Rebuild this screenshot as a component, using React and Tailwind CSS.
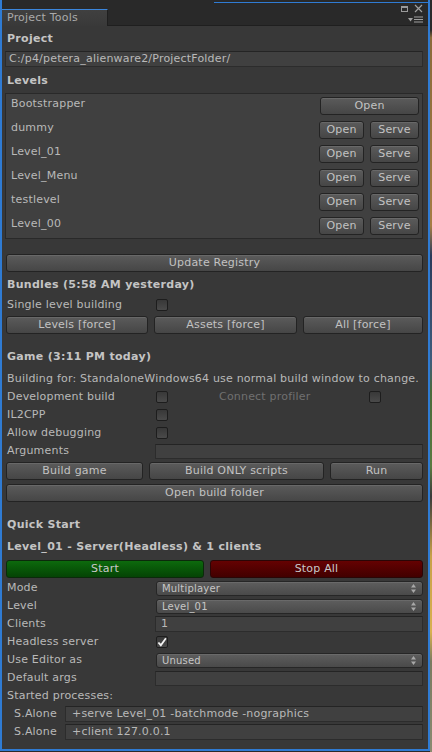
import React from 'react';

const levels = [
  { name: 'Bootstrapper', serve: false },
  { name: 'dummy', serve: true },
  { name: 'Level_01', serve: true },
  { name: 'Level_Menu', serve: true },
  { name: 'testlevel', serve: true },
  { name: 'Level_00', serve: true },
];

function Btn({ children, className = '' }) {
  return (
    <div
      className={`flex h-[18px] shrink-0 items-center justify-center rounded-[3px] border border-[#232323] bg-gradient-to-b from-[#5b5b5b] to-[#464646] text-[#c2c2c2] shadow-[inset_0_1px_0_rgba(255,255,255,0.09)] ${className}`}
    >
      {children}
    </div>
  );
}

function Check({ checked }) {
  return (
    <div className="flex h-[12px] w-[12px] items-center justify-center rounded-[2px] border border-[#1d1d1d] bg-gradient-to-b from-[#383838] to-[#4a4a4a]">
      {checked && (
        <svg width="11" height="11" viewBox="0 0 11 11">
          <polyline points="1.5,5.5 4.2,8.5 9.8,0.8" fill="none" stroke="#f2f2f2" strokeWidth="2" />
        </svg>
      )}
    </div>
  );
}

function Field({ children, className = '' }) {
  return (
    <div
      className={`flex items-center border border-[#2c2c2c] border-t-[#242424] bg-[#404040] text-[#b9b9b9] ${className}`}
    >
      {children}
    </div>
  );
}

function Drop({ value }) {
  return (
    <div className="flex h-[15px] flex-1 items-center rounded-[3px] border border-[#262626] bg-gradient-to-b from-[#5e5e5e] to-[#4a4a4a] pl-[5px] pr-[6px] text-[10px] text-[#c6c6c6] shadow-[inset_0_1px_0_rgba(255,255,255,0.08)]">
      <span className="flex-1">{value}</span>
      <svg width="5" height="9" viewBox="0 0 5 9">
        <polygon points="2.5,0 5,3.4 0,3.4" fill="#a8a8a8" />
        <polygon points="0,5.6 5,5.6 2.5,9" fill="#a8a8a8" />
      </svg>
    </div>
  );
}

function Row({ label, children, labelClass = '' }) {
  return (
    <div className="flex h-[18px] items-center">
      <div className={`w-[151px] shrink-0 whitespace-nowrap pl-[2px] ${labelClass}`}>{label}</div>
      {children}
    </div>
  );
}

function Heading({ children, className = '' }) {
  return (
    <div className={`flex h-[16px] items-center whitespace-nowrap pl-[2px] font-bold tracking-[0.3px] text-[#c4c4c4] ${className}`}>
      {children}
    </div>
  );
}

export default function App() {
  return (
    <div className="flex h-[752px] w-[432px] overflow-hidden bg-[#2a2a2a] font-['DejaVu_Sans',sans-serif] text-[11px] tracking-[0.2px] text-[#b9b9b9]">
      <div className="relative flex h-[751px] w-[430px] shrink-0 flex-col border-b-[2px] border-l-[2px] border-r-[2px] border-[#2f7bd3] bg-[#383838]">
        {/* title bar */}
        <div className="relative flex h-[26px] shrink-0 items-end border-b border-[#1f1f1f] bg-[#292929]">
          <div className="absolute left-[212px] right-0 top-[2px] h-[1px] bg-[#2f7bd3]" />
          <div className="-mb-[1px] flex h-[17px] w-[106px] items-center border-r border-t border-r-[#1f1f1f] border-t-[#3b86dc] bg-gradient-to-b from-[#404040] to-[#393939] pl-[5px] text-[#aaaaaa]">
            Project Tools
          </div>
          <div className="absolute right-[5px] top-[4px] flex flex-col items-end gap-[3px]">
            <div className="flex items-center gap-[6px]">
              <svg width="7" height="6" viewBox="0 0 7 6">
                <rect x="0.5" y="0.5" width="6" height="5" fill="none" stroke="#9a9a9a" />
                <rect x="0" y="0" width="7" height="2" fill="#9a9a9a" />
              </svg>
              <svg width="9" height="9" viewBox="0 0 9 9">
                <path d="M1 1 L8 8 M8 1 L1 8" stroke="#a0a0a0" strokeWidth="1.2" />
              </svg>
            </div>
            <div className="flex items-center gap-[1px]">
              <svg width="5" height="4" viewBox="0 0 5 4">
                <polygon points="0,0 5,0 2.5,3.5" fill="#a0a0a0" />
              </svg>
              <svg width="9" height="7" viewBox="0 0 9 7">
                <path d="M0 1 H9 M0 3.5 H9 M0 6 H9" stroke="#a0a0a0" strokeWidth="1.2" />
              </svg>
            </div>
          </div>
        </div>

        {/* content */}
        <div className="flex flex-col pl-[3px] pr-[5px]">
          <Heading className="mt-[5px]">Project</Heading>
          <Field className="mt-[4px] h-[16px] px-[3px]">C:/p4/petera_alienware2/ProjectFolder/</Field>

          <Heading className="mt-[6px]">Levels</Heading>
          <div className="mt-[4px] flex flex-col border border-[#292929] bg-[#404040]">
            {levels.map((lv) => (
              <div key={lv.name} className="flex h-[24px] items-center pl-[5px] pr-[3px]">
                <span className="mb-[3px] flex-1">{lv.name}</span>
                {lv.serve ? (
                  <div className="flex gap-[6px]">
                    <Btn className="h-[17px] w-[45px]">Open</Btn>
                    <Btn className="h-[17px] w-[49px]">Serve</Btn>
                  </div>
                ) : (
                  <Btn className="h-[17px] w-[99px]">Open</Btn>
                )}
              </div>
            ))}
          </div>

          <div className="mt-[15px] pl-[1px]">
            <Btn>Update Registry</Btn>
          </div>

          <Heading className="mt-[5px]">Bundles (5:58 AM yesterday)</Heading>
          <div className="mt-[3px]">
            <Row label="Single level building">
              <Check />
            </Row>
          </div>
          <div className="mt-[2px] flex gap-[6px] pl-[1px]">
            <Btn className="w-[142px]">Levels [force]</Btn>
            <Btn className="w-[143px]">Assets [force]</Btn>
            <Btn className="flex-1">All [force]</Btn>
          </div>

          <Heading className="mt-[15px]">Game (3:11 PM today)</Heading>
          <div className="mt-[5px] flex h-[18px] items-center whitespace-nowrap pl-[2px]">
            Building for: StandaloneWindows64 use normal build window to change.
          </div>
          <Row label="Development build">
            <Check />
            <span className="ml-[51px] w-[150px] text-[#707070]">Connect profiler</span>
            <Check />
          </Row>
          <Row label="IL2CPP">
            <Check />
          </Row>
          <Row label="Allow debugging">
            <Check />
          </Row>
          <Row label="Arguments">
            <Field className="-ml-[1px] h-[15px] flex-1" />
          </Row>
          <div className="mt-[2px] flex gap-[6px] pl-[1px]">
            <Btn className="w-[137px]">Build game</Btn>
            <Btn className="w-[175px]">Build ONLY scripts</Btn>
            <Btn className="flex-1">Run</Btn>
          </div>
          <div className="mt-[4px] pl-[1px]">
            <Btn>Open build folder</Btn>
          </div>

          <Heading className="mt-[15px]">Quick Start</Heading>
          <Heading className="mt-[6px]">Level_01 - Server(Headless) &amp; 1 clients</Heading>
          <div className="mt-[5px] flex gap-[6px] pl-[1px]">
            <div className="flex h-[18px] w-[198px] items-center justify-center rounded-[3px] border border-[#0b2a0b] bg-gradient-to-b from-[#0d6a0d] to-[#054405] text-[#c9c9c9]">
              Start
            </div>
            <div className="flex h-[18px] flex-1 items-center justify-center rounded-[3px] border border-[#2a0606] bg-gradient-to-b from-[#650202] to-[#420000] text-[#c9c9c9]">
              Stop All
            </div>
          </div>

          <div className="mt-[1px] flex flex-col">
            <Row label="Mode">
              <Drop value="Multiplayer" />
            </Row>
            <Row label="Level">
              <Drop value="Level_01" />
            </Row>
            <Row label="Clients">
              <Field className="-ml-[1px] h-[16px] flex-1 px-[5px]">1</Field>
            </Row>
            <Row label="Headless server">
              <Check checked />
            </Row>
            <Row label="Use Editor as">
              <Drop value="Unused" />
            </Row>
            <Row label="Default args">
              <Field className="-ml-[1px] h-[15px] flex-1" />
            </Row>
            <div className="flex h-[18px] items-center pl-[2px]">Started processes:</div>
            {['+serve Level_01 -batchmode -nographics', '+client 127.0.0.1'].map((p) => (
              <div key={p} className="flex h-[18px] items-center">
                <span className="w-[60px] shrink-0 pl-[9px]">S.Alone</span>
                <Field className="h-[16px] flex-1 whitespace-nowrap px-[6px]">{p}</Field>
              </div>
            ))}
          </div>
        </div>
      </div>
      <div className="h-full w-[2px] bg-[linear-gradient(to_bottom,#2a2a2a_0%,#2a2a2a_4%,#8a6a3a_5%,#a57c44_30%,#2a3a5a_34%,#3e5c7c_48%,#4a6a3a_52%,#5a7a40_62%,#3a3a3a_66%,#c8a048_74%,#d8b050_84%,#7a7a60_88%,#8a8a70_100%)]" />
    </div>
  );
}
